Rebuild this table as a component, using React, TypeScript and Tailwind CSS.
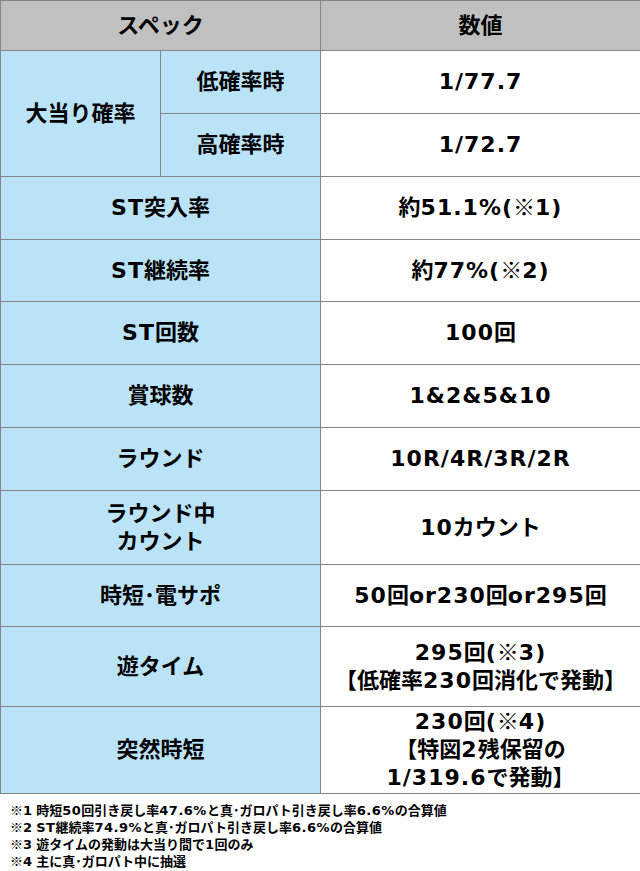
import React from 'react';

const font = { fontFamily: '"Liberation Sans", "Noto Sans CJK JP", sans-serif' };

// the source sets its latin/digits in a wide face, so ASCII runs get DejaVu
function W({ s, track = 'tracking-[1px]' }: { s: string; track?: string }) {
  const parts = s.split(/([\x21-\x7E]+)/);
  return (
    <>
      {parts.map((p, i) =>
        /^[\x21-\x7E]+$/.test(p) ? (
          <span key={i} className={`font-['DejaVu_Sans',sans-serif] ${track}`}>{p}</span>
        ) : (
          <React.Fragment key={i}>{p}</React.Fragment>
        )
      )}
    </>
  );
}

function Lines({ lines, track }: { lines: string[]; track?: string }) {
  return (
    <>
      {lines.map((l, i) => (
        <React.Fragment key={i}>
          {i > 0 && <br />}
          <W s={l} track={track} />
        </React.Fragment>
      ))}
    </>
  );
}

type Row = { label: string[]; value: string[]; h: string };

// single-label rows below the 大当り確率 block
const rows: Row[] = [
  { label: ['ST突入率'], value: ['約51.1%(※1)'], h: 'h-[63px]' },
  { label: ['ST継続率'], value: ['約77%(※2)'], h: 'h-[62px]' },
  { label: ['ST回数'], value: ['100回'], h: 'h-[63px]' },
  { label: ['賞球数'], value: ['1&2&5&10'], h: 'h-[63px]' },
  { label: ['ラウンド'], value: ['10R/4R/3R/2R'], h: 'h-[63px]' },
  { label: ['ラウンド中', 'カウント'], value: ['10カウント'], h: 'h-[74px]' },
  { label: ['時短･電サポ'], value: ['50回or230回or295回'], h: 'h-[62px]' },
  { label: ['遊タイム'], value: ['295回(※3)', '【低確率230回消化で発動】'], h: 'h-[80px]' },
  { label: ['突然時短'], value: ['230回(※4)', '【特図2残保留の', '1/319.6で発動】'], h: 'h-[87px]' },
];

const notes = [
  '※1 時短50回引き戻し率47.6%と真･ガロパト引き戻し率6.6%の合算値',
  '※2 ST継続率74.9%と真･ガロパト引き戻し率6.6%の合算値',
  '※3 遊タイムの発動は大当り間で1回のみ',
  '※4 主に真･ガロパト中に抽選',
];

const cell = 'border border-[#858585] text-center align-middle font-bold text-black';
const label = `${cell} bg-[#bae3f8] text-[22px] leading-[28px]`;
const value = `${cell} bg-white text-[22px] leading-[28px]`;
const head = `${cell} bg-[#c0c0c0] text-[22px]`;

export default function App() {
  return (
    <div className="w-[640px] h-[871px] bg-white" style={font}>
      <table className="w-[640px] border-collapse table-fixed">
        <colgroup>
          <col className="w-[160px]" />
          <col className="w-[160px]" />
          <col className="w-[320px]" />
        </colgroup>
        <tbody>
          <tr className="h-[50px]">
            <td colSpan={2} className={head}>スペック</td>
            <td className={head}>数値</td>
          </tr>
          <tr className="h-[63px]">
            <td rowSpan={2} className={label}>大当り確率</td>
            <td className={label}>低確率時</td>
            <td className={value}><W s="1/77.7" /></td>
          </tr>
          <tr className="h-[63px]">
            <td className={label}>高確率時</td>
            <td className={value}><W s="1/72.7" /></td>
          </tr>
          {rows.map((r, i) => (
            <tr key={i} className={r.h}>
              <td colSpan={2} className={label}><Lines lines={r.label} /></td>
              <td className={value}><Lines lines={r.value} /></td>
            </tr>
          ))}
        </tbody>
      </table>
      <div className="pt-[8px] pl-[10px] text-[13px] leading-[17px] font-bold text-black">
        {notes.map((n) => (
          <p key={n}><W s={n} track="tracking-[0.5px]" /></p>
        ))}
      </div>
    </div>
  );
}
